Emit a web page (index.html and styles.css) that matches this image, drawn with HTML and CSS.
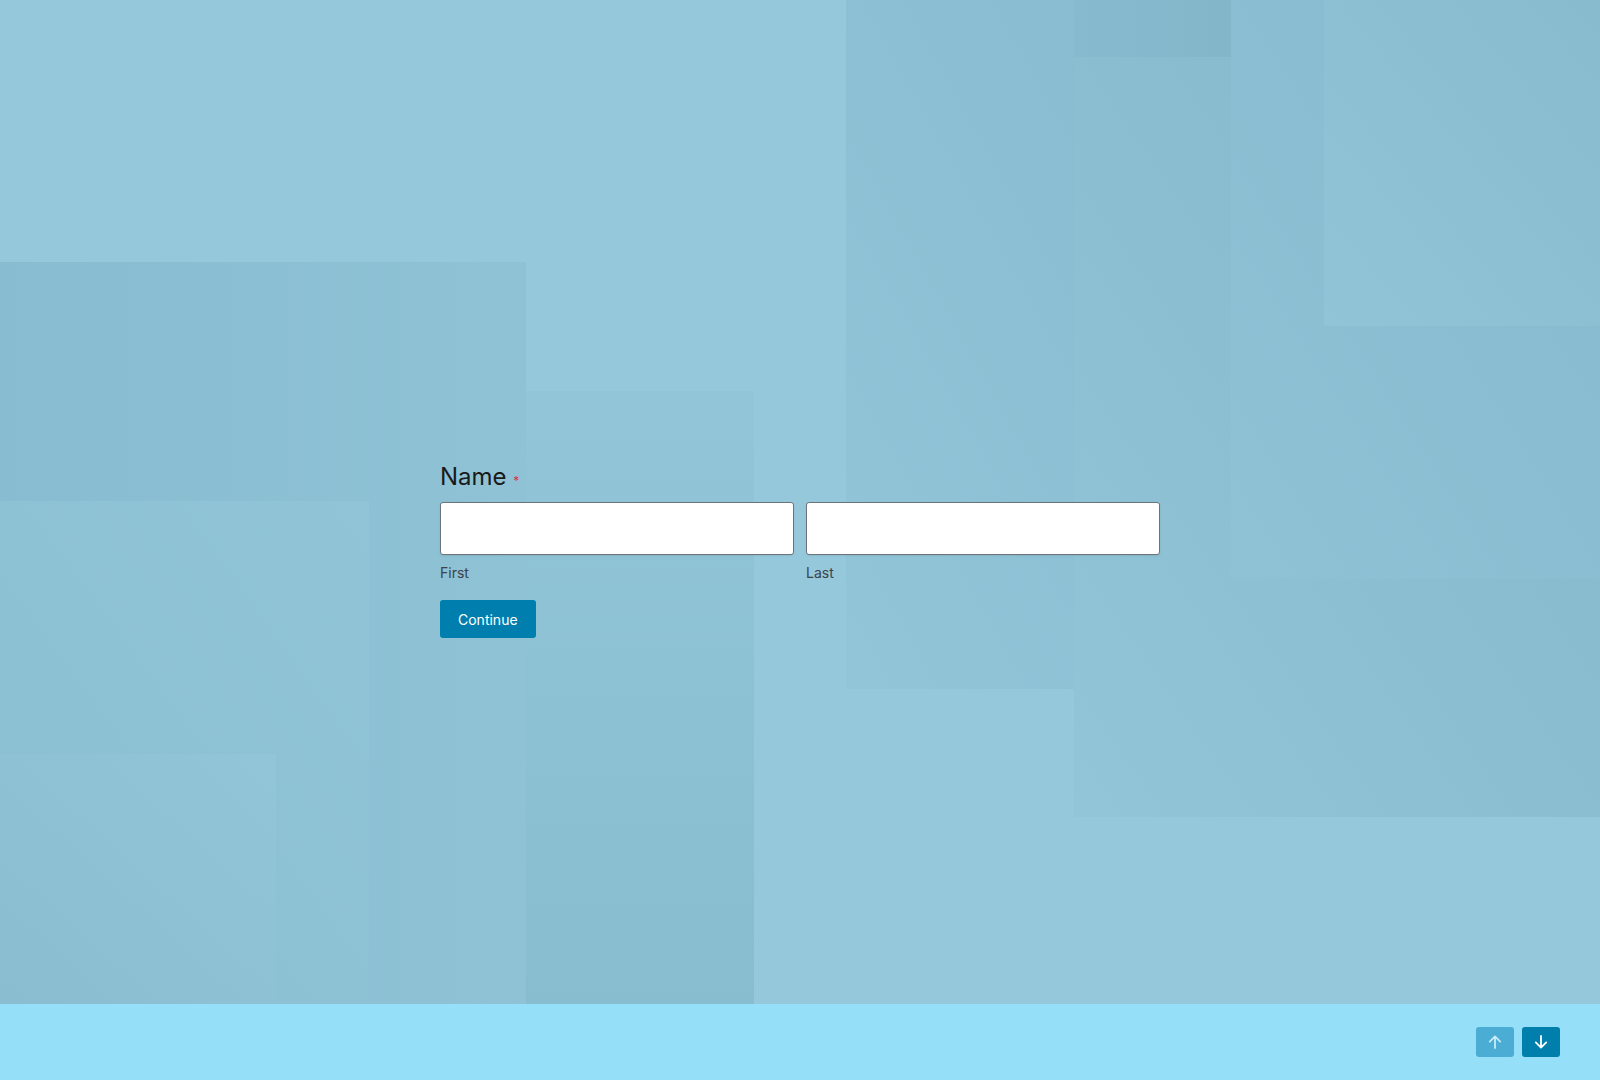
FILE: index.html
```html
<!DOCTYPE html>
<html lang="en">
<head>
<meta charset="utf-8">
<title>Name</title>
<link rel="stylesheet" href="styles.css">
</head>
<body>
<main class="stage">
  <div class="backdrop" aria-hidden="true">
    <div class="shape s1"></div>
    <div class="shape s2"></div>
    <div class="shape s3"></div>
    <div class="shape s4"></div>
    <div class="shape s5"></div>
    <div class="shape s6"></div>
    <div class="shape s7"></div>
    <div class="shape s8"></div>
    <div class="shape s9"></div>
  </div>
  <form class="form" onsubmit="return false">
    <div class="label">Name <span class="req">*</span></div>
    <div class="fields">
      <div class="field">
        <input type="text" class="input" aria-label="First">
        <span class="sub">First</span>
      </div>
      <div class="field">
        <input type="text" class="input" aria-label="Last">
        <span class="sub">Last</span>
      </div>
    </div>
    <button type="submit" class="btn">Continue</button>
  </form>
</main>
<footer class="footer">
  <button class="nav nav-up" aria-label="Previous">
    <svg width="16" height="16" viewBox="0 0 16 16" fill="none" stroke="currentColor" stroke-width="1.8" stroke-linecap="round" stroke-linejoin="round"><path d="M8 14V2.5M2.8 7.6L8 2.4l5.2 5.2"/></svg>
  </button>
  <button class="nav nav-down" aria-label="Next">
    <svg width="16" height="16" viewBox="0 0 16 16" fill="none" stroke="currentColor" stroke-width="1.8" stroke-linecap="round" stroke-linejoin="round"><path d="M8 2v11.5M2.8 8.4L8 13.6l5.2-5.2"/></svg>
  </button>
</footer>
</body>
</html>
```

FILE: styles.css
```css
* { box-sizing: border-box; }
html, body { margin: 0; padding: 0; }
body {
  font-family: Inter, "Noto Sans", "Liberation Sans", sans-serif;
  background: #96c8dc;
  width: 1600px;
  height: 1080px;
  overflow: hidden;
}
.stage {
  position: relative;
  height: 1004px;
  padding-top: 462px;
  background: #96c8dc;
  overflow: hidden;
}
.backdrop { position: absolute; inset: 0; z-index: 0; }
.shape { position: absolute; }
.s1 { left: 0; top: 262px; width: 526px; height: 742px;
  background: linear-gradient(to right, #88bcd0, #8fc2d5); }
.s2 { left: 0; top: 501px; width: 369px; height: 503px;
  background: linear-gradient(to top right, #8abed1, #91c4d7); }
.s3 { left: 0; top: 754px; width: 276px; height: 250px;
  background: linear-gradient(to top right, #8abdd0, #92c5d8); }
.s4 { left: 526px; top: 391px; width: 228px; height: 613px;
  background: linear-gradient(to bottom, #92c5d8, #88bccf); }
.s5 { left: 846px; top: 0; width: 385px; height: 689px;
  background: linear-gradient(to top right, #92c5d8, #87bace); }
.s6 { left: 1074px; top: 57px; width: 526px; height: 760px;
  background: linear-gradient(to top right, #92c5d8, #89bccf 60%, #86b9cd); }
.s7 { left: 1231px; top: 0; width: 369px; height: 579px;
  background: linear-gradient(to top right, #8fc2d5, #86b9cd); }
.s8 { left: 1324px; top: 0; width: 276px; height: 326px;
  background: linear-gradient(to top right, #91c4d7, #88bbce); }
.s9 { left: 1074px; top: 0; width: 157px; height: 57px;
  background: linear-gradient(to right, #87bace, #83b6c9); }

.form {
  position: relative;
  z-index: 1;
  width: 720px;
  margin: 0 auto;
  display: flex;
  flex-direction: column;
  align-items: flex-start;
}
.label {
  font-size: 24px;
  line-height: 29px;
  height: 29px;
  color: #1a1a1a;
  margin-bottom: 11px;
}
.req {
  color: #d63638;
  font-size: 12px;
  line-height: 1;
}
.fields {
  display: flex;
  gap: 12px;
  width: 100%;
}
.field {
  flex: 1;
  display: flex;
  flex-direction: column;
}
.input {
  height: 53px;
  width: 100%;
  border: 1px solid #6e7379;
  border-radius: 3px;
  background: #ffffff;
  box-shadow: 0 1px 2px rgba(0, 0, 0, 0.08);
  font: inherit;
  padding: 0 12px;
}
.sub {
  margin-top: 8px;
  font-size: 14px;
  line-height: 20px;
  color: #3c434a;
}
.btn {
  margin-top: 17px;
  height: 38px;
  padding: 0 18px;
  border: 0;
  border-radius: 3px;
  background: #007fae;
  color: #ffffff;
  font-family: inherit;
  font-size: 14px;
  font-weight: 400;
  cursor: pointer;
}
.footer {
  height: 76px;
  background: #96dff9;
  display: flex;
  justify-content: flex-end;
  align-items: center;
  gap: 8px;
  padding-right: 40px;
}
.nav {
  width: 38px;
  height: 30px;
  border: 0;
  border-radius: 3px;
  display: flex;
  align-items: center;
  justify-content: center;
  padding: 0;
  cursor: pointer;
}
.nav-up { background: #4badd3; color: #c9ecf7; }
.nav-down { background: #007fac; color: #ffffff; }
```
